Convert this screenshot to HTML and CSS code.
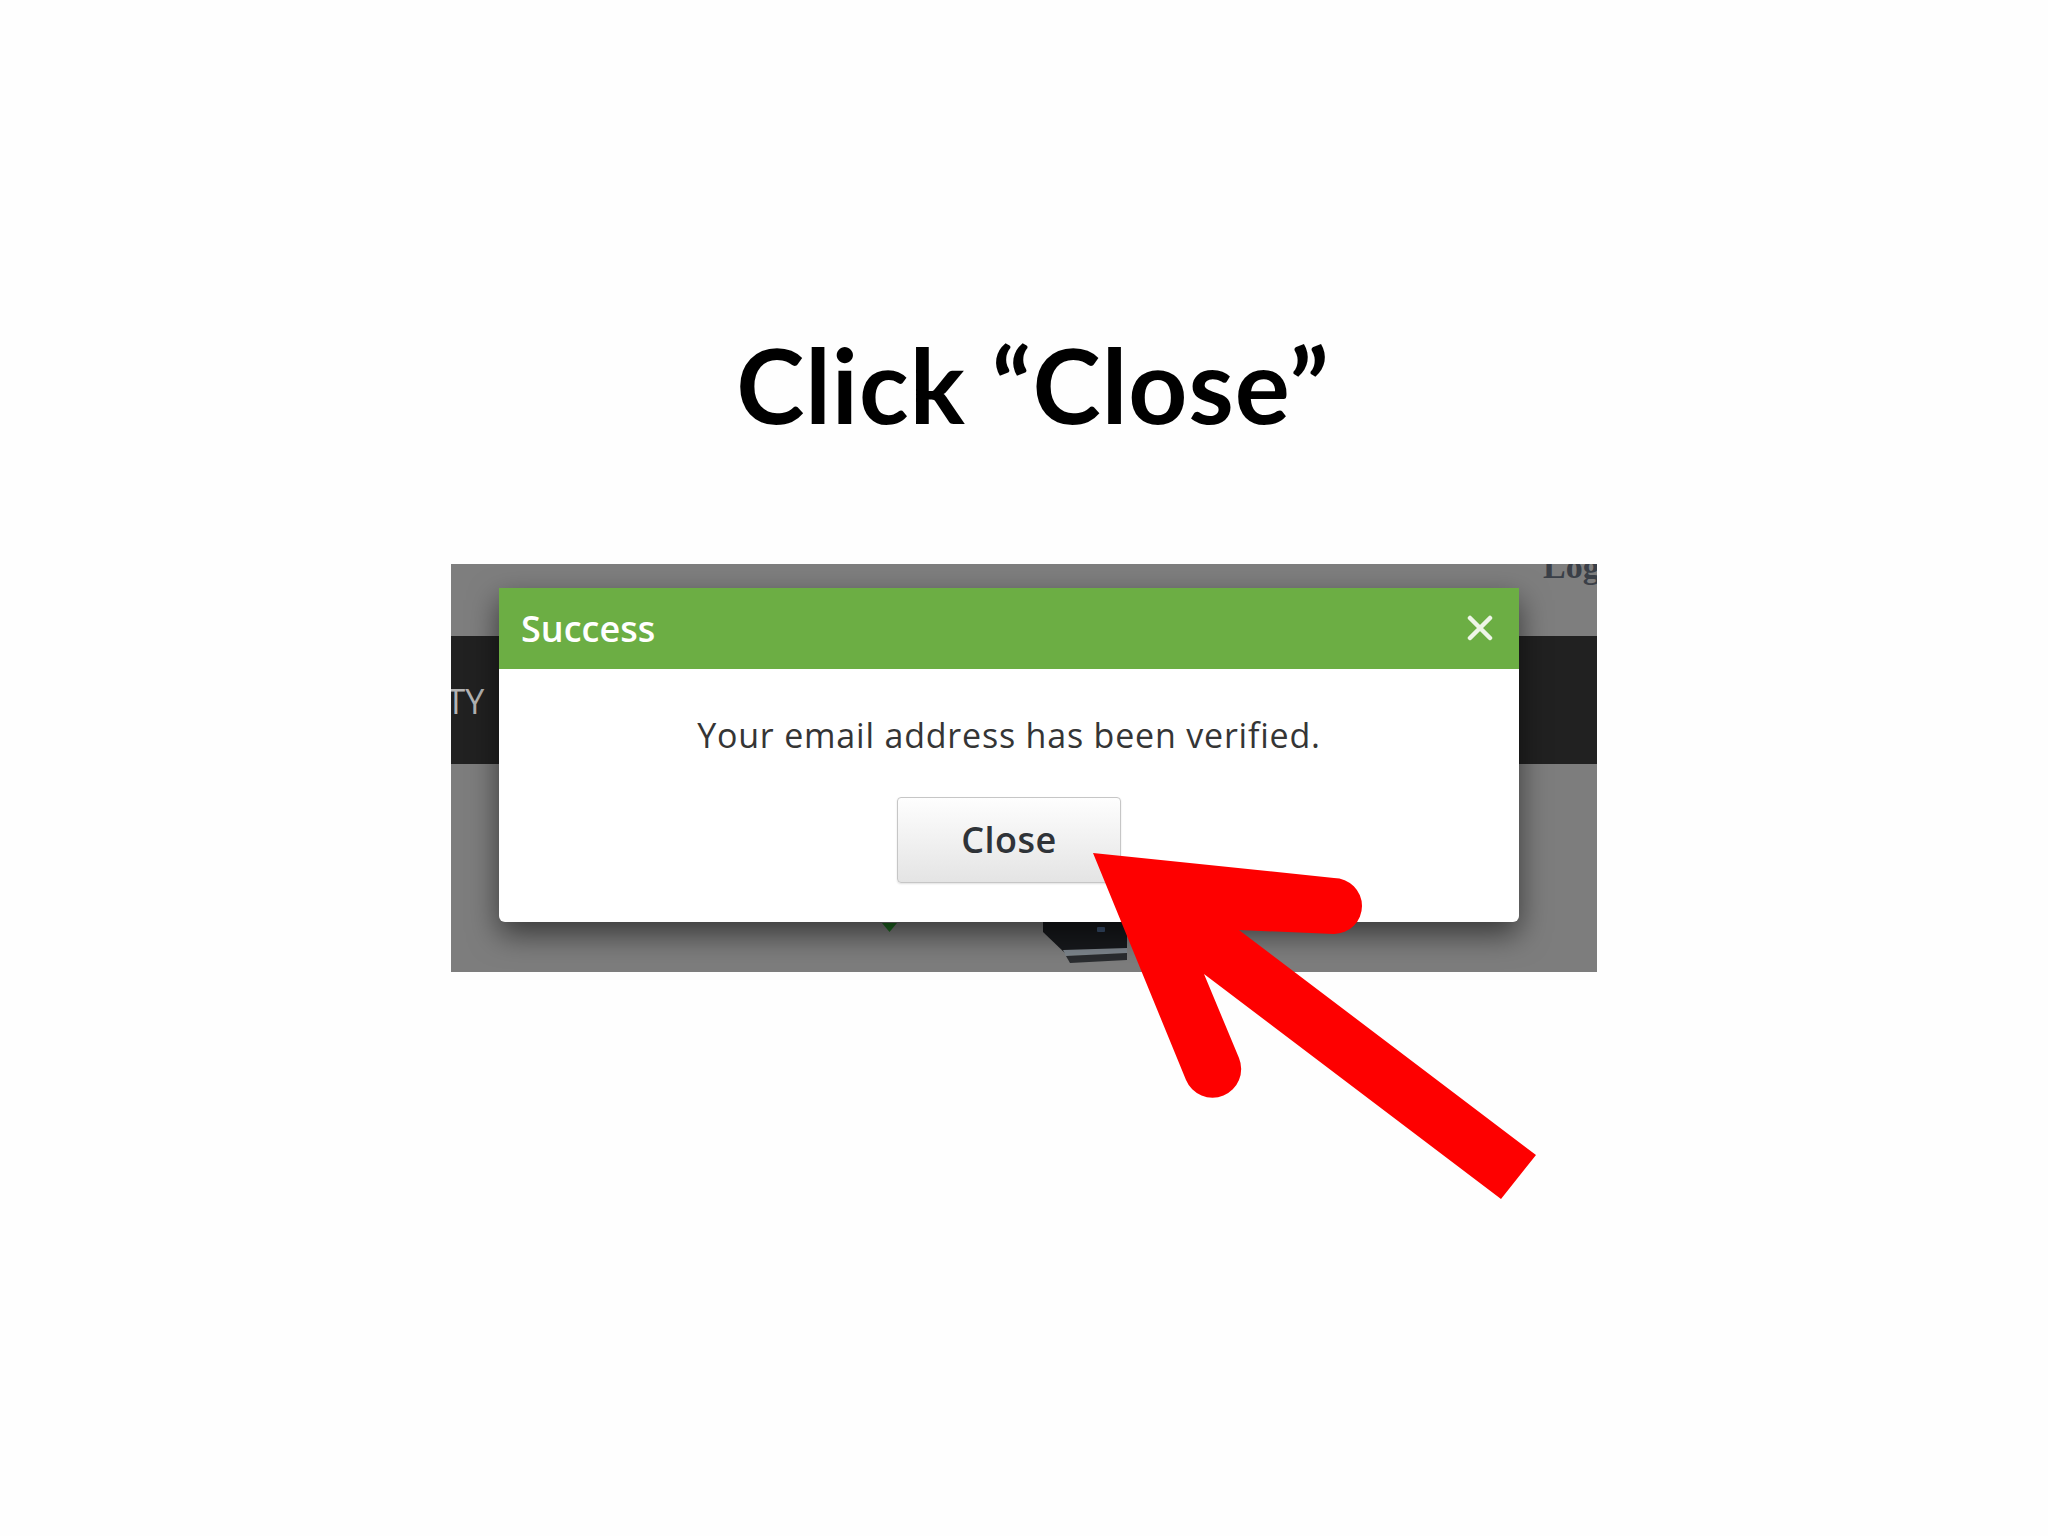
FILE: index.html
```html
<!DOCTYPE html>
<html lang="en">
<head>
  <meta charset="UTF-8">
  <title>Click Close</title>
  <meta name="viewport" content="width=device-width, initial-scale=1.0">
  <link rel="stylesheet" href="styles.css">
</head>
<body>
  <main class="slide">
    <h1 class="slide-title">Click “Close”</h1>

    <!-- Captured site with the verification dialog open -->
    <div class="shot">
      <div class="shot-top">
        <span class="login">Login</span>
      </div>
      <div class="shot-nav">
        <span class="nav-label">ITY</span>
      </div>
      <div class="shot-main">
        <svg class="shot-art" width="1146" height="208" viewBox="0 0 1146 208">
          <!-- dropdown caret -->
          <polygon points="431,159 446,159 438.5,168" fill="#1f6b22"/>
          <!-- product box -->
          <polygon points="592,150 676,150 676,188 616,191 592,168" fill="#17191c"/>
          <polygon points="612,186 676,184 676,189 615,192" fill="#7d858c"/>
          <polygon points="615,192 676,189 676,196 619,199" fill="#2a2c2f"/>
          <rect x="646" y="163" width="8" height="5" rx="1" fill="#3b5272"/>
        </svg>
      </div>

      <div class="modal">
        <div class="modal-head">
          <span class="modal-title">Success</span>
          <svg class="modal-x" width="26" height="26" viewBox="0 0 26 26">
            <path d="M3 3 L23 23 M23 3 L3 23" stroke="#eef5e8" stroke-width="4.5" stroke-linecap="round"/>
          </svg>
        </div>
        <div class="modal-body">
          <p class="modal-msg">Your email address has been verified.</p>
          <button class="btn-close">Close</button>
        </div>
      </div>
    </div>
  </main>

  <!-- Red pointer arrow laid over the slide -->
  <svg class="pointer" width="2048" height="1536" viewBox="0 0 2048 1536">
    <path d="M1093 853 L1334 878 A28 28 0 0 1 1334 934 L1239 930 L1536 1155 L1501 1199 L1204 974 L1239 1058 A28 28 0 0 1 1186 1080 Z" fill="#fe0000"/>
  </svg>
</body>
</html>
```

FILE: styles.css
```css
/* Slide */
body {
  margin: 0;
  padding: 0;
  background: #fefefe;
  font-family: "Open Sans", Arial, sans-serif;
}

.slide {
  padding-top: 323px;
}

.slide-title {
  margin: 0 0 117px;
  padding-left: 18px;
  font-family: Lato, "Liberation Sans", sans-serif;
  font-weight: 700;
  font-size: 103px;
  line-height: 1.2;
  letter-spacing: 1px;
  text-align: center;
  color: #000;
}

/* Captured page */
.shot {
  position: relative;
  width: 1146px;
  height: 408px;
  margin: 0 auto;
  overflow: hidden;
  background: #7f7f7f;
}

.shot-top {
  height: 72px;
  display: flex;
  justify-content: flex-end;
  align-items: flex-start;
  background: #7e7e7e;
}

.login {
  margin-top: -14px;
  margin-right: -31px;
  font-family: "Liberation Serif", serif;
  font-weight: 700;
  font-size: 34px;
  line-height: 1;
  color: #3a3f47;
}

.shot-nav {
  height: 128px;
  padding-top: 48px;
  box-sizing: border-box;
  background: #212121;
}

.nav-label {
  display: block;
  margin-left: -14px;
  font-size: 34px;
  line-height: 1;
  color: #b3b3b3;
}

.shot-main {
  height: 208px;
  background: #7d7d7d;
}

.shot-art {
  display: block;
}

/* Dialog */
.modal {
  position: absolute;
  left: 48px;
  top: 24px;
  width: 1020px;
  height: 334px;
  background: #fff;
  border-radius: 0 0 6px 6px;
  box-shadow: 0 12px 30px rgba(0, 0, 0, 0.55);
}

.modal-head {
  height: 81px;
  display: flex;
  align-items: center;
  justify-content: space-between;
  padding: 0 26px 0 22px;
  background: #6cae44;
}

.modal-title {
  font-size: 36px;
  font-weight: 600;
  color: #fff;
}

.modal-x {
  display: block;
}

.modal-body {
  display: flex;
  flex-direction: column;
  align-items: center;
  padding-top: 43px;
}

.modal-msg {
  margin: 0 0 39px;
  font-size: 34px;
  line-height: 1.362;
  letter-spacing: 0.8px;
  color: #353535;
}

.btn-close {
  width: 224px;
  height: 86px;
  border: 1px solid #c6c6c6;
  border-radius: 4px;
  background: linear-gradient(#fefefe, #e4e4e4);
  box-shadow: 0 1px 2px rgba(0, 0, 0, 0.12);
  font-family: "Open Sans", Arial, sans-serif;
  font-size: 36px;
  font-weight: 600;
  line-height: 1;
  letter-spacing: 0.5px;
  color: #2f3338;
}

/* Arrow overlay */
.pointer {
  position: absolute;
  left: 0;
  top: 0;
  pointer-events: none;
}
```
